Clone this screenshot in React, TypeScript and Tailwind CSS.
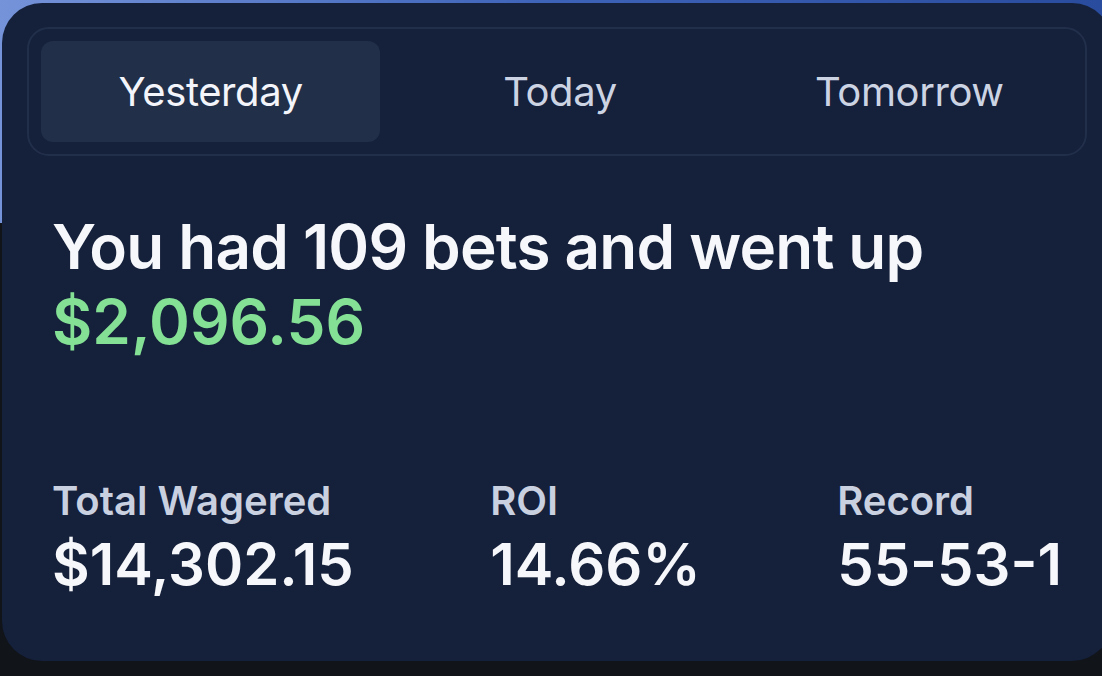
import React from "react";

const tabs = ["Yesterday", "Today", "Tomorrow"];

const stats = [
  { label: "Total Wagered", value: "$14,302.15" },
  { label: "ROI", value: "14.66%" },
  { label: "Record", value: "55-53-1" },
];

export default function App() {
  return (
    <div
      className="relative h-[676px] w-[1102px] overflow-hidden bg-[#111419]"
      style={{ fontFamily: "Inter, 'Noto Sans', sans-serif" }}
    >
      <div className="absolute left-0 top-0 h-[223px] w-full bg-gradient-to-r from-[#7593d9] via-[#3d63b8] to-[#2a4c9e]" />
      <div className="relative ml-[2px] mt-[3px] h-[658px] w-[1110px] rounded-[40px] bg-[#15203a] px-[25px] pt-[24px]">
        <div className="grid grid-cols-3 gap-[10px] rounded-[22px] border-2 border-[#222f4b] p-[12px] pr-[6px]">
          {tabs.map((t, i) => (
            <div
              key={t}
              className={
                i === 0
                  ? "flex h-[101px] items-center justify-center rounded-[12px] bg-[#212f48] text-[40px] font-normal tracking-[-0.4px] text-[#f3f5fa]"
                  : "flex h-[101px] items-center justify-center rounded-[12px] text-[40px] font-normal tracking-[-0.4px] text-[#ccd4e4]"
              }
            >
              {t}
            </div>
          ))}
        </div>
        <div className="px-[25px]">
          <div className="mt-[53px] text-[62px] font-semibold leading-[75px] tracking-[-0.8px] text-[#f6f7fa]">
            You had 109 bets and went up
          </div>
          <div className="text-[62px] font-semibold leading-[75px] tracking-[0px] text-[#83e095]">
            $2,096.56
          </div>
          <div className="mt-[118px] flex justify-between">
            {stats.map((s) => (
              <div key={s.label} className="flex flex-col">
                <div className="text-[40px] font-semibold leading-[48px] text-[#c9d1e1]">
                  {s.label}
                </div>
                <div className="mt-[6px] text-[58px] font-semibold leading-[66px] text-[#f6f7fa]">
                  {s.value}
                </div>
              </div>
            ))}
          </div>
        </div>
      </div>
    </div>
  );
}
